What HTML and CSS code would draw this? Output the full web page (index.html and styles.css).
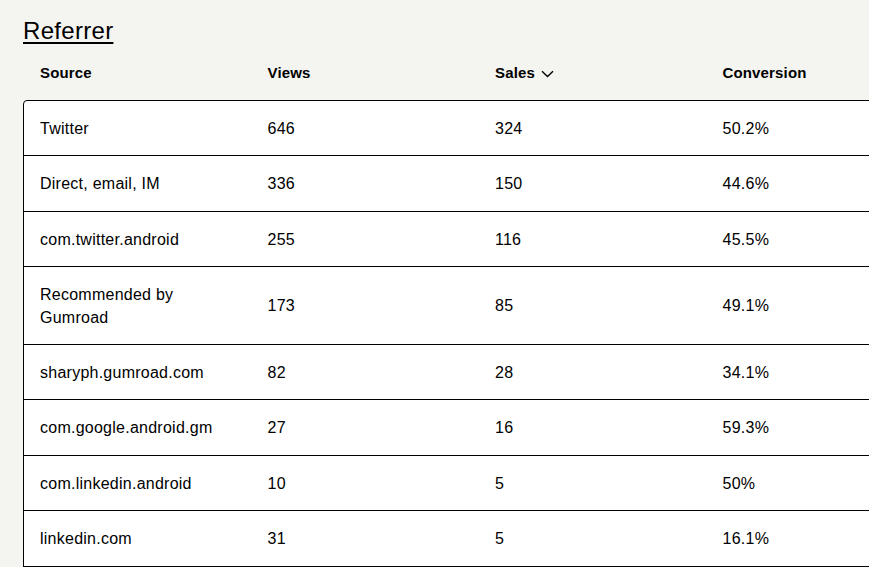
FILE: index.html
```html
<!DOCTYPE html>
<html lang="en">
<head>
<meta charset="utf-8">
<title>Referrer</title>
<link rel="stylesheet" href="styles.css">
</head>
<body>
<section class="panel">
  <h2 class="title">Referrer</h2>
  <div class="table">
    <div class="thead">
      <div class="th">Source</div>
      <div class="th">Views</div>
      <div class="th sort">Sales
        <svg class="chev" width="13" height="8" viewBox="0 0 13 8"><path d="M1 1.2l5.5 5.3 5.5-5.3" fill="none" stroke="#000" stroke-width="1.4"/></svg>
      </div>
      <div class="th">Conversion</div>
    </div>
    <div class="tbody">
      <div class="tr"><div class="td">Twitter</div><div class="td">646</div><div class="td">324</div><div class="td">50.2%</div></div>
      <div class="tr"><div class="td">Direct, email, IM</div><div class="td">336</div><div class="td">150</div><div class="td">44.6%</div></div>
      <div class="tr"><div class="td">com.twitter.android</div><div class="td">255</div><div class="td">116</div><div class="td">45.5%</div></div>
      <div class="tr"><div class="td narrow">Recommended by Gumroad</div><div class="td">173</div><div class="td">85</div><div class="td">49.1%</div></div>
      <div class="tr"><div class="td">sharyph.gumroad.com</div><div class="td">82</div><div class="td">28</div><div class="td">34.1%</div></div>
      <div class="tr"><div class="td">com.google.android.gm</div><div class="td">27</div><div class="td">16</div><div class="td">59.3%</div></div>
      <div class="tr"><div class="td">com.linkedin.android</div><div class="td">10</div><div class="td">5</div><div class="td">50%</div></div>
      <div class="tr"><div class="td">linkedin.com</div><div class="td">31</div><div class="td">5</div><div class="td">16.1%</div></div>
    </div>
  </div>
</section>
</body>
</html>
```
FILE: styles.css
```css
html, body {
  margin: 0;
  padding: 0;
  overflow: hidden;
  background: #f4f4f0;
  color: #000;
  font-family: "Liberation Sans", Arial, sans-serif;
}

.panel {
  padding: 16px 0 0 23px;
}

.title {
  margin: 0;
  font-size: 24px;
  font-weight: 400;
  line-height: 30px;
  letter-spacing: 0.3px;
  text-decoration: underline;
  text-decoration-thickness: 2px;
  text-underline-offset: 3px;
}

.table {
  width: 912px;
}

.thead {
  display: grid;
  grid-template-columns: repeat(4, 227.5px);
  padding: 0 1px;
}

.th {
  padding: 16px;
  font-size: 15px;
  font-weight: 700;
  line-height: 22px;
  letter-spacing: 0.15px;
  display: flex;
  align-items: center;
}

.sort {
  gap: 6px;
}

.chev {
  display: block;
  margin-top: 1px;
}

.tbody {
  background: #fff;
  border: 1px solid #000;
  border-radius: 4px 4px 0 0;
}

.tr {
  display: grid;
  grid-template-columns: repeat(4, 227.5px);
  border-bottom: 1px solid #000;
}

.td {
  padding: 17px 16px 15px;
  font-size: 16px;
  line-height: 22.4px;
  letter-spacing: 0.25px;
  display: flex;
  align-items: center;
}

.narrow {
  max-width: 150px;
}
```
